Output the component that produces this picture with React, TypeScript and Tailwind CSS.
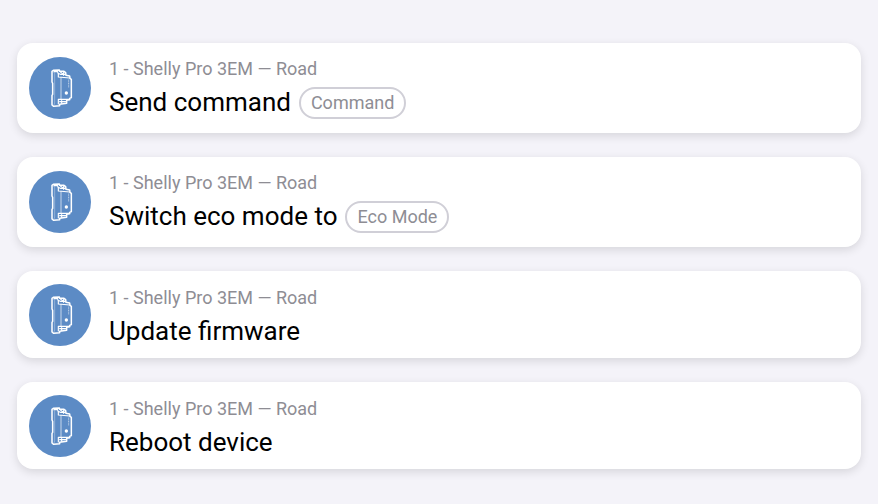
type Action = {
  title: string;
  token?: string;
};

const device = "1 - Shelly Pro 3EM — Road";

const actions: Action[] = [
  { title: "Send command", token: "Command" },
  { title: "Switch eco mode to", token: "Eco Mode" },
  { title: "Update firmware" },
  { title: "Reboot device" },
];

const DeviceIcon = () => {
  return (
    <div className="w-[62px] h-[62px] shrink-0 rounded-full bg-[#5c8bc5]">
      <svg
        viewBox="27 27 186 186"
        className="w-full h-full"
        fill="none"
        stroke="white"
        strokeLinecap="round"
        strokeLinejoin="round"
        aria-hidden="true"
      >
        <path
          d="M96 70 L100 67 L118 66 L119 70 L132 70 L137 74 L138 82 L149 84 L150 91 L154 94 V149 L149 151 V155 L140 157 V166 L119 169 V173 L101 175 L96 171 V142 L98 139 V106 L96 102 Z"
          strokeWidth="4.5"
        />
        <path d="M102 73 L104 77 V165 L102 170" strokeWidth="2" opacity="0.5" />
        <path d="M102 71 H113 L114 76 L121 79 H136" strokeWidth="3.5" />
        <path d="M115 78 V87 L149 90" strokeWidth="3.5" />
        <path d="M123 88 V155" strokeWidth="2.5" opacity="0.8" />
        <path d="M149 154 H115 V168 M119 161 H137 M125 166 V158" strokeWidth="3.5" />
        <path d="M122 73 L128 77 M131 73 V82" strokeWidth="3.5" />
        <path d="M146 96 V119" strokeWidth="3" strokeDasharray="1 4" opacity="0.6" />
        <circle cx="139" cy="135" r="5" fill="white" stroke="none" />
      </svg>
    </div>
  );
};

const App = () => {
  return (
    <main className="min-h-screen bg-[#f4f3f9] px-[17px] pt-[43px] pb-8 font-['Roboto',sans-serif]">
      <ul className="flex flex-col gap-6">
        {actions.map((item) => {
          return (
            <li
              key={item.title}
              className="flex min-h-[87px] items-center gap-[18px] rounded-2xl bg-white p-3 shadow-[0_3px_10px_rgba(0,0,0,0.12)]"
            >
              <DeviceIcon />
              <div className="flex flex-col gap-1">
                <p className="text-[18px] leading-7 text-[#8e8d94]">
                  {device}
                </p>
                <div className="flex flex-wrap items-start gap-x-2">
                  <h2 className="text-[26px] leading-[30px] text-black">
                    {item.title}
                  </h2>
                  {item.token && (
                    <button
                      type="button"
                      className="mb-0.5 flex h-8 items-center rounded-full border-2 border-[#d0cfd7] px-2.5 pb-0.5 text-[18px] text-[#8e8d94]"
                    >
                      {item.token}
                    </button>
                  )}
                </div>
              </div>
            </li>
          );
        })}
      </ul>
    </main>
  );
};

export default App;
